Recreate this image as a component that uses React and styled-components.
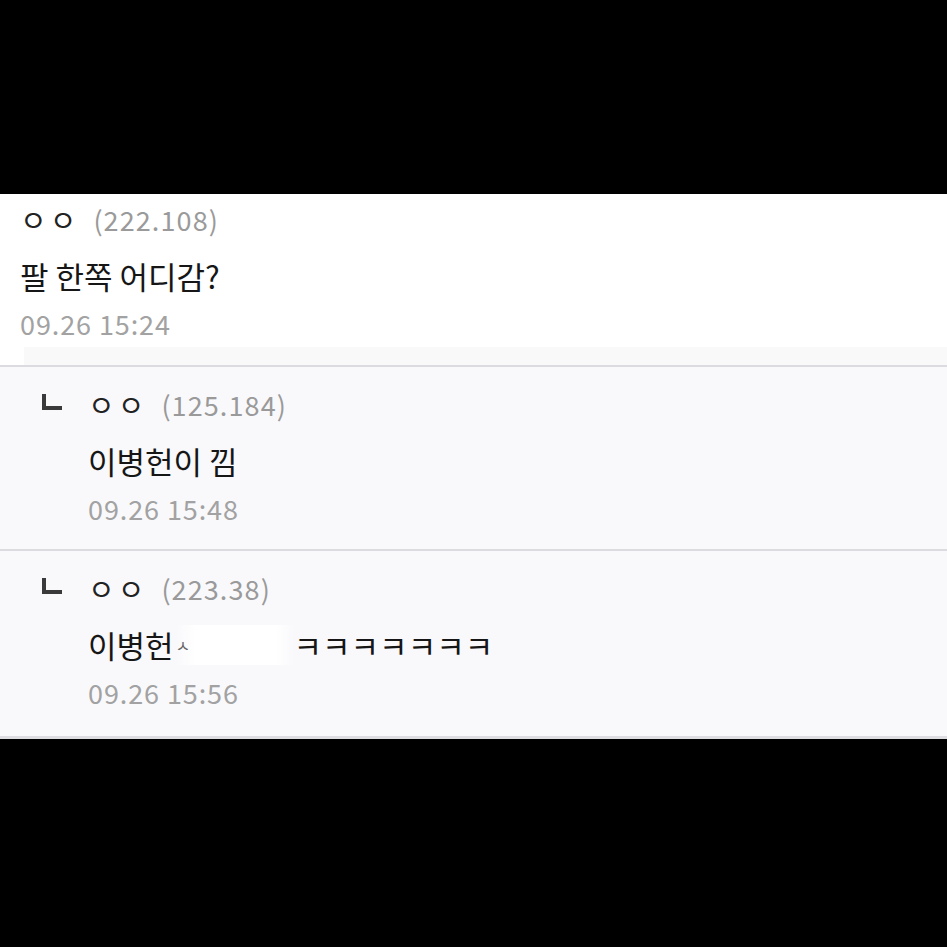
import React from 'react';
import styled, {createGlobalStyle} from 'styled-components';

const GlobalStyle = createGlobalStyle`
  html, body {
    margin: 0;
    padding: 0;
    background: #000;
  }
  body {
    font-family: "Noto Sans CJK KR", "Noto Sans", sans-serif;
  }
`;

const comments = [
    {nick: 'ㅇㅇ', ip: '(125.184)', date: '09.26 15:48', body: '이병헌이 낌'},
    {nick: 'ㅇㅇ', ip: '(223.38)', date: '09.26 15:56', body: null},
];

const App = () => {
    return (
        <>
            <GlobalStyle/>
            <Page>
                <Panel>
                    <Comment>
                        <NameLine>
                            <Nick>ㅇㅇ</Nick>
                            <Ip>(222.108)</Ip>
                        </NameLine>
                        <Body>팔 한쪽 어디감?</Body>
                        <Date>09.26 15:24</Date>
                        <Shade/>
                    </Comment>
                    {comments.map((c, i) => (
                        <Reply key={i}>
                            <MarkerBox>
                                <Marker/>
                            </MarkerBox>
                            <ReplyContent>
                                <NameLine>
                                    <Nick>{c.nick}</Nick>
                                    <Ip>{c.ip}</Ip>
                                </NameLine>
                                {c.body ? (
                                    <Body>{c.body}</Body>
                                ) : (
                                    <Body>
                                        이병헌<Redact>ㅅ</Redact><Laugh>ㅋㅋㅋㅋㅋㅋㅋ</Laugh>
                                    </Body>
                                )}
                                <Date>{c.date}</Date>
                            </ReplyContent>
                        </Reply>
                    ))}
                </Panel>
            </Page>
        </>
    );
};

const Page = styled.div`
  width: 947px;
  height: 947px;
  background: #000;
  padding-top: 194px;
  box-sizing: border-box;
`;

const Panel = styled.div`
  background: #fff;
  border-bottom: 3px solid #dedee2;
`;

const Comment = styled.div`
  position: relative;
  padding: 0 0 25px 20px;
  background: #fff;
`;

const Shade = styled.div`
  position: absolute;
  left: 24px;
  right: 0;
  bottom: 0;
  height: 18px;
  background: #f9f9f9;
`;

const NameLine = styled.div`
  display: flex;
  align-items: center;
  gap: 14px;
  height: 50px;
`;

const Nick = styled.span`
  font-size: 29px;
  color: #222;
  letter-spacing: 3px;
`;

const Ip = styled.span`
  font-size: 27px;
  color: #9a9a9a;
  letter-spacing: 1.1px;
`;

const Body = styled.div`
  font-size: 31px;
  color: #161616;
  line-height: 64px;
  height: 64px;
  display: flex;
  align-items: center;
`;

const Date = styled.div`
  font-size: 27px;
  color: #a2a2a2;
  line-height: 32px;
  letter-spacing: 0.9px;
`;

const Reply = styled.div`
  display: flex;
  background: #f9f9fc;
  border-top: 2px solid #dcdce0;
  padding: 12px 0 24px 40px;

  &:last-child {
    padding-bottom: 27px;
  }
`;

const MarkerBox = styled.div`
  width: 48px;
  height: 50px;
  display: flex;
  align-items: center;
  margin-left: 2px;
  margin-right: -2px;
`;

const Marker = styled.span`
  display: block;
  width: 16px;
  height: 12px;
  border-left: 4px solid #3a3a3a;
  border-bottom: 4px solid #3a3a3a;
  margin-top: -4px;
`;

const ReplyContent = styled.div`
  display: flex;
  flex-direction: column;
`;

const Redact = styled.span`
  display: inline-block;
  width: 118px;
  color: #666;
  font-size: 16px;
  background: linear-gradient(90deg, #f9f9fc 0, #fff 20px, #fff 100px, #f9f9fc 118px);
  line-height: 40px;
  margin-left: 2px;
`;

const Laugh = styled.span`
  letter-spacing: 0px;
`;

export default App;
